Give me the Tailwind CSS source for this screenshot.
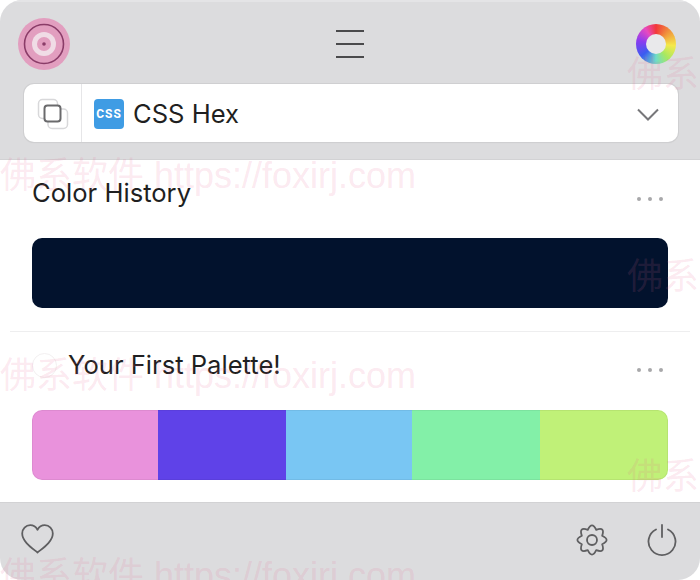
<!DOCTYPE html>
<html lang="en">
<head>
    <meta charset="UTF-8">
    <meta name="viewport" content="width=device-width, initial-scale=1.0">
    <title>Color Picker</title>
    <script src="https://cdn.jsdelivr.net/npm/@tailwindcss/browser@4"></script>
</head>
<body class="bg-white font-['Inter',sans-serif] overflow-hidden">

    <div class="relative w-[700px] h-[580px] overflow-hidden bg-white">
        <div class="flex flex-col h-full rounded-[22px] overflow-hidden bg-[#dcdcde]">

            <!-- Header -->
            <div class="h-[160px] shrink-0 flex flex-col border-t-2 border-[#e4e4e6] border-b border-b-[#d2d2d4]">
                <div class="h-[82px] shrink-0 flex items-center justify-between px-[18px] pt-[2px]">
                    <svg width="52" height="52" viewBox="0 0 52 52">
                        <circle cx="26" cy="26" r="26" fill="#e29ebf"/>
                        <circle cx="26" cy="26" r="19.5" fill="none" stroke="#8a3c68" stroke-width="1.6"/>
                        <circle cx="26" cy="26" r="12" fill="#f0dce6"/>
                        <circle cx="26" cy="26" r="7" fill="#e29ebf"/>
                        <circle cx="26" cy="26" r="1.8" fill="#8a3c68"/>
                    </svg>
                    <div class="flex flex-col gap-[11px]">
                        <div class="w-[28px] h-[2px] bg-[#4a4a4c]"></div>
                        <div class="w-[28px] h-[2px] bg-[#4a4a4c]"></div>
                        <div class="w-[28px] h-[2px] bg-[#4a4a4c]"></div>
                    </div>
                    <div class="w-[52px] flex justify-center">
                        <div class="w-[40px] h-[40px] rounded-full flex items-center justify-center bg-[conic-gradient(#f2383a_0deg,#f0923c_45deg,#f5e94a_95deg,#a8e860_140deg,#6fdcc8_180deg,#3a5cf0_230deg,#8a3cf0_280deg,#e84ac0_325deg,#f2383a_360deg)]">
                            <div class="w-[20px] h-[20px] rounded-full bg-[#e9e9eb]"></div>
                        </div>
                    </div>
                </div>

                <!-- Format selector -->
                <div class="mx-[24px] w-[654px] h-[58px] flex items-center bg-white rounded-[10px] shadow-[0_0_0_1px_#cfcfd1,0_1px_1px_#c8c8ca]">
                    <div class="w-[58px] h-full shrink-0 flex items-center justify-center border-r border-[#e6e6e8]">
                        <svg width="32" height="32" viewBox="0 0 32 32" fill="none" class="mt-[2px]">
                            <rect x="1.5" y="1.5" width="19" height="19" rx="4" stroke="#d8d8da" stroke-width="1.5"/>
                            <rect x="11" y="11" width="19.5" height="19.5" rx="4" stroke="#d8d8da" stroke-width="1.5"/>
                            <rect x="7.5" y="7.5" width="16" height="16" rx="3" fill="#fff" stroke="#6a6a6c" stroke-width="2"/>
                        </svg>
                    </div>
                    <div class="ml-[12px] mt-[2px] w-[30px] h-[30px] rounded-[4px] bg-[#3f9ce4] flex items-center justify-center">
                        <span class="text-white font-bold text-[12px] tracking-[1px] font-['Roboto',sans-serif]">CSS</span>
                    </div>
                    <span class="ml-[9px] mt-[2px] text-[25.6px] text-[#1f1f21]">CSS Hex</span>
                    <svg class="ml-auto mr-[19px] mt-[2px]" width="22" height="13" viewBox="0 0 22 13" fill="none">
                        <path d="M1 1.5 L11 11.5 L21 1.5" stroke="#77777a" stroke-width="2"/>
                    </svg>
                </div>
            </div>

            <!-- Palettes -->
            <div class="flex-1 bg-white flex flex-col">
                <div class="mx-[10px] px-[22px] pb-[23px] border-b border-[#eeeeef]">
                    <div class="h-[78px] flex items-center justify-between pr-[5px] pb-[11px]">
                        <span class="text-[25.6px] text-[#1f1f21]">Color History</span>
                        <div class="flex gap-[7px] mt-[10px]">
                            <div class="w-1 h-1 rounded-full bg-[#a8a8aa]"></div>
                            <div class="w-1 h-1 rounded-full bg-[#a8a8aa]"></div>
                            <div class="w-1 h-1 rounded-full bg-[#a8a8aa]"></div>
                        </div>
                    </div>
                    <div class="h-[70px] rounded-[10px] bg-[#02122d]"></div>
                </div>
                <div class="mx-[10px] px-[22px]">
                    <div class="h-[78px] flex items-center pr-[5px] pb-[11px]">
                        <div class="w-[25px] h-[25px] rounded-full border-[1.5px] border-[#f3f0f1]"></div>
                        <span class="ml-[11px] text-[25.6px] text-[#1f1f21]">Your First Palette!</span>
                        <div class="ml-auto flex gap-[7px] mt-[9px]">
                            <div class="w-1 h-1 rounded-full bg-[#a8a8aa]"></div>
                            <div class="w-1 h-1 rounded-full bg-[#a8a8aa]"></div>
                            <div class="w-1 h-1 rounded-full bg-[#a8a8aa]"></div>
                        </div>
                    </div>
                    <div class="relative h-[70px] rounded-[10px] overflow-hidden flex">
                        <div class="w-[126px] bg-[#e992dc]"></div>
                        <div class="w-[128px] bg-[#5f42e8]"></div>
                        <div class="w-[126px] bg-[#79c6f3]"></div>
                        <div class="w-[128px] bg-[#83f0a8]"></div>
                        <div class="flex-1 bg-[#c0f178]"></div>
                        <div class="absolute inset-0 rounded-[10px] ring-1 ring-inset ring-black/5"></div>
                    </div>
                </div>
            </div>

            <!-- Footer -->
            <div class="h-[78px] shrink-0 border-t border-[#d2d2d4] flex items-start justify-between pl-[21px] pr-[23px] pt-[21px]">
                <svg width="33" height="30" viewBox="0 0 33 30" fill="none">
                    <path d="M16.5 28.5 C11 24 1.2 17.5 1.2 9.5 C1.2 4.8 4.8 1.2 9.2 1.2 C12.4 1.2 15 3 16.5 5.8 C18 3 20.6 1.2 23.8 1.2 C28.2 1.2 31.8 4.8 31.8 9.5 C31.8 17.5 22 24 16.5 28.5 Z" stroke="#5f5f61" stroke-width="1.8" stroke-linejoin="round"/>
                </svg>
                <div class="flex gap-[39px]">
                    <svg width="32" height="32" viewBox="0 0 32 32" fill="none" stroke="#5f5f61" stroke-width="1.8" stroke-linejoin="round">
                        <circle cx="16" cy="16" r="5"/>
                        <path d="M11.79 5.84 Q16 -3 20.21 5.84 Q29.44 2.56 26.16 11.79 Q35 16 26.16 20.21 Q29.44 29.44 20.21 26.16 Q16 35 11.79 26.16 Q2.56 29.44 5.84 20.21 Q-3 16 5.84 11.79 Q2.56 2.56 11.79 5.84 Z"/>
                    </svg>
                    <svg width="30" height="32" viewBox="0 0 30 32" fill="none" stroke="#5f5f61" stroke-width="1.8" stroke-linecap="round">
                        <path d="M9 5.5 A13.5 13.5 0 1 0 21 5.5"/>
                        <path d="M15 1 L15 13"/>
                    </svg>
                </div>
            </div>
        </div>

        <!-- Watermark -->
        <div class="absolute inset-0 pointer-events-none text-[#e9658f]/15 font-['Liberation_Sans','Noto_Sans_CJK_SC',sans-serif] text-[36px] leading-none whitespace-nowrap">
            <span class="absolute left-0 top-[158px]">佛系软件 https://foxirj.com</span>
            <span class="absolute left-0 top-[358px]">佛系软件 https://foxirj.com</span>
            <span class="absolute left-0 top-[558px]">佛系软件 https://foxirj.com</span>
            <span class="absolute left-[627px] top-[57px]">佛系</span>
            <span class="absolute left-[627px] top-[259px]">佛系</span>
            <span class="absolute left-[627px] top-[459px]">佛系</span>
        </div>
    </div>

</body>
</html>
